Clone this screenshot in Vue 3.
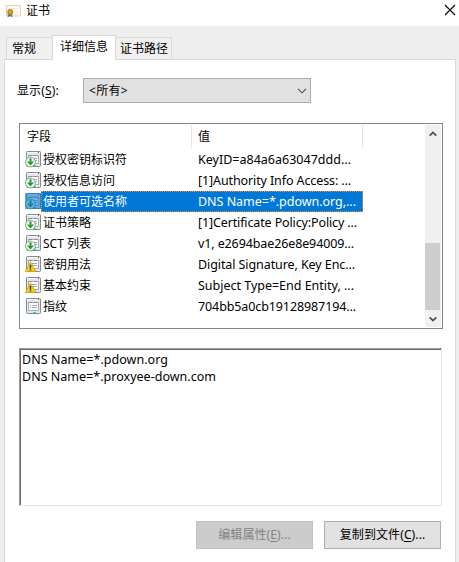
<script setup>
const rows = [
  { icon: 'down', name: '授权密钥标识符', value: 'KeyID=a84a6a63047ddd...', w: 153 },
  { icon: 'down', name: '授权信息访问', value: '[1]Authority Info Access: ...', w: 153 },
  { icon: 'down', name: '使用者可选名称', value: 'DNS Name=*.pdown.org,...', w: 158, selected: true },
  { icon: 'down', name: '证书策略', value: '[1]Certificate Policy:Policy ...', w: 159 },
  { icon: 'down', name: 'SCT 列表', value: 'v1, e2694bae26e8e94009...', w: 156 },
  { icon: 'warn', name: '密钥用法', value: 'Digital Signature, Key Enc...', w: 157 },
  { icon: 'warn', name: '基本约束', value: 'Subject Type=End Entity, ...', w: 156 },
  { icon: 'plain', name: '指纹', value: '704bb5a0cb19128987194...', w: 158 },
]
const lines = [
  { text: 'DNS Name=*.pdown.org', w: 146 },
  { text: 'DNS Name=*.proxyee-down.com', w: 194 },
]
const ctx = document.createElement('canvas').getContext('2d')
ctx.font = '12.5px "Noto Sans"'
const tracking = (text, w) => ({ letterSpacing: ((w - ctx.measureText(text).width) / text.length).toFixed(3) + 'px' })
</script>

<template>
  <div class="dialog">
    <header class="titlebar">
      <svg class="cert" width="16" height="14" viewBox="0 0 16 14">
        <rect x=".5" y=".5" width="14" height="10.500" rx=".5" fill="#fdfaf4" stroke="#edcda9" />
        <path d="M3 3.500h9M9 6.500h3M9 8.500h3" stroke="#ecebf2" />
        <path d="M1.700 9v3.500L4 11l2.300 1.500V9z" fill="#3e7fce" />
        <circle cx="4.200" cy="7" r="3" fill="#c88c08" />
        <circle cx="4.200" cy="7" r="1.200" fill="#e5aa22" />
      </svg>
      <span class="title">证书</span>
      <svg class="close" width="12" height="12" viewBox="0 0 12 12"><path d="M1 1l10 10M11 1L1 11" stroke="#000" stroke-width="1.100" /></svg>
    </header>
    <nav class="tabs">
      <div class="tab first">常规</div>
      <div class="tab active">详细信息</div>
      <div class="tab last">证书路径</div>
    </nav>
    <main class="panel">
      <div class="filter">
        <label>显示(<u>S</u>):</label>
        <div class="select">
          <span>&lt;所有&gt;</span>
          <svg width="10" height="6" viewBox="0 0 10 6"><path d="M1 .8l4 4 4-4" fill="none" stroke="#505050" stroke-width="1.100" /></svg>
        </div>
      </div>
      <div class="list">
        <div class="table">
          <div class="head"><span class="c1">字段</span><span class="c2">值</span></div>
          <div v-for="r in rows" :key="r.name" class="row" :class="{ selected: r.selected }">
            <svg class="icon" width="17" height="17" viewBox="0 0 17 17">
              <rect x="1.500" y=".5" width="14" height="15" rx=".8" fill="#e3e6ea" stroke="#858990" />
              <path d="M2 1.500h13" stroke="#f8f9fa" />
              <path d="M13 1.500h1" stroke="#555" />
              <rect x="3.500" y="4.500" width="10" height="8" fill="#fff" stroke="#a9aeb6" />
              <path d="M4 4.500h3M9 4.500h3" stroke="#868c95" />
              <path d="M7 7.500h5M7 9.500h5" stroke="#a0a6af" />
              <path d="M5 7.500h1M5 9.500h1" stroke="#55c4dc" />
              <path d="M8 14.500h3" stroke="#35c5e8" />
              <g v-if="r.icon === 'down'">
                <circle cx="5.400" cy="11" r="4.900" fill="#f5fbf3" stroke="#7d9c7a" stroke-width=".9" />
                <path d="M5.500 7.300v5" stroke="#1f9a2c" stroke-width="2" />
                <path d="M1.900 10.500h1.800l1.800 1 1.800-1h1.800L5.500 14.600z" fill="#1f9a2c" />
              </g>
              <g v-if="r.icon === 'warn'">
                <path d="M5.500 5.800L.4 15.600h10.400z" fill="#f4d01f" stroke="#c9a400" stroke-width=".8" stroke-linejoin="round" />
                <path d="M5.500 8.800v3.700M5.500 13.300v1.200" stroke="#333" stroke-width="1.400" />
              </g>
              <rect v-if="r.selected" x="0" y="0" width="16" height="16" fill="#0078d7" opacity=".58" />
            </svg>
            <div class="cells">
              <span class="name">{{ r.name }}</span>
              <span class="value" :style="tracking(r.value, r.w)">{{ r.value }}</span>
            </div>
          </div>
        </div>
        <div class="scroll">
          <svg width="8" height="6" viewBox="0 0 8 6"><path d="M.7 4.700L4 1.400l3.300 3.300" fill="none" stroke="#505050" stroke-width="1.800" /></svg>
          <div class="thumb"></div>
          <svg width="8" height="6" viewBox="0 0 8 6"><path d="M.7 1.300L4 4.600l3.300-3.300" fill="none" stroke="#505050" stroke-width="1.800" /></svg>
        </div>
      </div>
      <div class="detail">
        <div v-for="l in lines" :key="l.text"><span :style="tracking(l.text, l.w)">{{ l.text }}</span></div>
      </div>
      <div class="actions">
        <button class="disabled" disabled>编辑属性(<u>E</u>)...</button>
        <button>复制到文件(<u>C</u>)...</button>
      </div>
    </main>
  </div>
</template>

<style>
body { margin: 0; overflow: hidden; }
</style>
<style scoped>
* { box-sizing: border-box; }
.dialog { width: 459px; height: 562px; background: #eee; color: #000; font: 12px/16px "Noto Sans", "Noto Sans CJK SC", sans-serif; display: flex; flex-direction: column; overflow: hidden; white-space: nowrap; }
svg { display: block; flex: none; }
u { text-underline-offset: 2px; text-decoration-thickness: 1px; }
.titlebar { height: 26px; background: #fff; display: flex; align-items: flex-start; padding: 4px 3px 0 6px; flex: none; }
.cert { margin-top: 1px; }
.title { margin-left: 4px; line-height: 13px; }
.close { margin-left: auto; }
.tabs { height: 34px; padding: 9px 0 0 6px; display: flex; align-items: flex-end; flex: none; position: relative; z-index: 1; }
.tab { border: 1px solid #d9d9d9; height: 23px; background: #f0f0f0; line-height: 21px; }
.first { width: 46px; border-right: 0; padding-left: 5px; }
.active { width: 64px; height: 25px; background: #fff; border-bottom: 0; padding-left: 7px; line-height: 22px; }
.last { width: 56px; border-left: 0; padding-left: 4px; }
.panel { margin: -1px 3px 0 4px; height: 503px; border: 1px solid #d9d9d9; border-bottom: 0; background: #fff; padding: 18px 12px 0 14px; flex: none; }
.filter { display: flex; height: 25px; align-items: center; }
.filter label { width: 64px; margin-left: -2px; letter-spacing: .12px; }
.select { margin-left: 2px; width: 228px; height: 25px; border: 1px solid #adadad; background: #e1e1e1; display: flex; align-items: center; justify-content: space-between; padding: 0 3px 0 5px; letter-spacing: .3px; }
.list { margin-top: 20px; width: 424px; height: 206px; border: 1px solid #828790; display: flex; justify-content: space-between; padding: 1px 1px 1px 0; }
.table { width: 344px; }
.head { height: 24px; display: flex; line-height: 24px; }
.c1 { width: 172px; padding-left: 7px; border-right: 1px solid #e5e5e5; }
.c2 { width: 171px; padding-left: 6px; border-right: 1px solid #e5e5e5; }
.row { height: 21px; display: flex; padding-left: 5px; }
.icon { margin-top: 2px; }
.cells { width: 322px; margin-left: -1px; height: 21px; display: flex; line-height: 19px; border: 1px solid transparent; padding-left: 1px; }
.name { width: 155px; }
.value, .detail { font-size: 12.5px; }
.selected .cells { background: #0078d7; color: #fff; border: 1px dotted #ef8b32; }
.scroll { width: 16px; background: #f0f0f0; display: flex; flex-direction: column; align-items: center; padding: 6px 0 5px; }
.thumb { width: 15px; height: 67px; background: #cdcdcd; margin: auto 1px 6px 0; }
.detail { margin-top: 19px; width: 423px; height: 158px; border: 1px solid #e3e3e3; border-top-color: #a0a0a0; border-left-color: #a0a0a0; box-shadow: inset 1px 1px #696969; padding: 2px 2px; line-height: 17px; }
.actions { margin-top: 15px; display: flex; gap: 11px; justify-content: flex-end; width: 422px; }
button { width: 117px; height: 28px; padding: 0; border: 1px solid #adadad; border-radius: 0; background: #e1e1e1; color: #000; font: inherit; letter-spacing: .1px; }
.disabled { background: #ccc; border-color: #bfbfbf; color: #838383; }
</style>
